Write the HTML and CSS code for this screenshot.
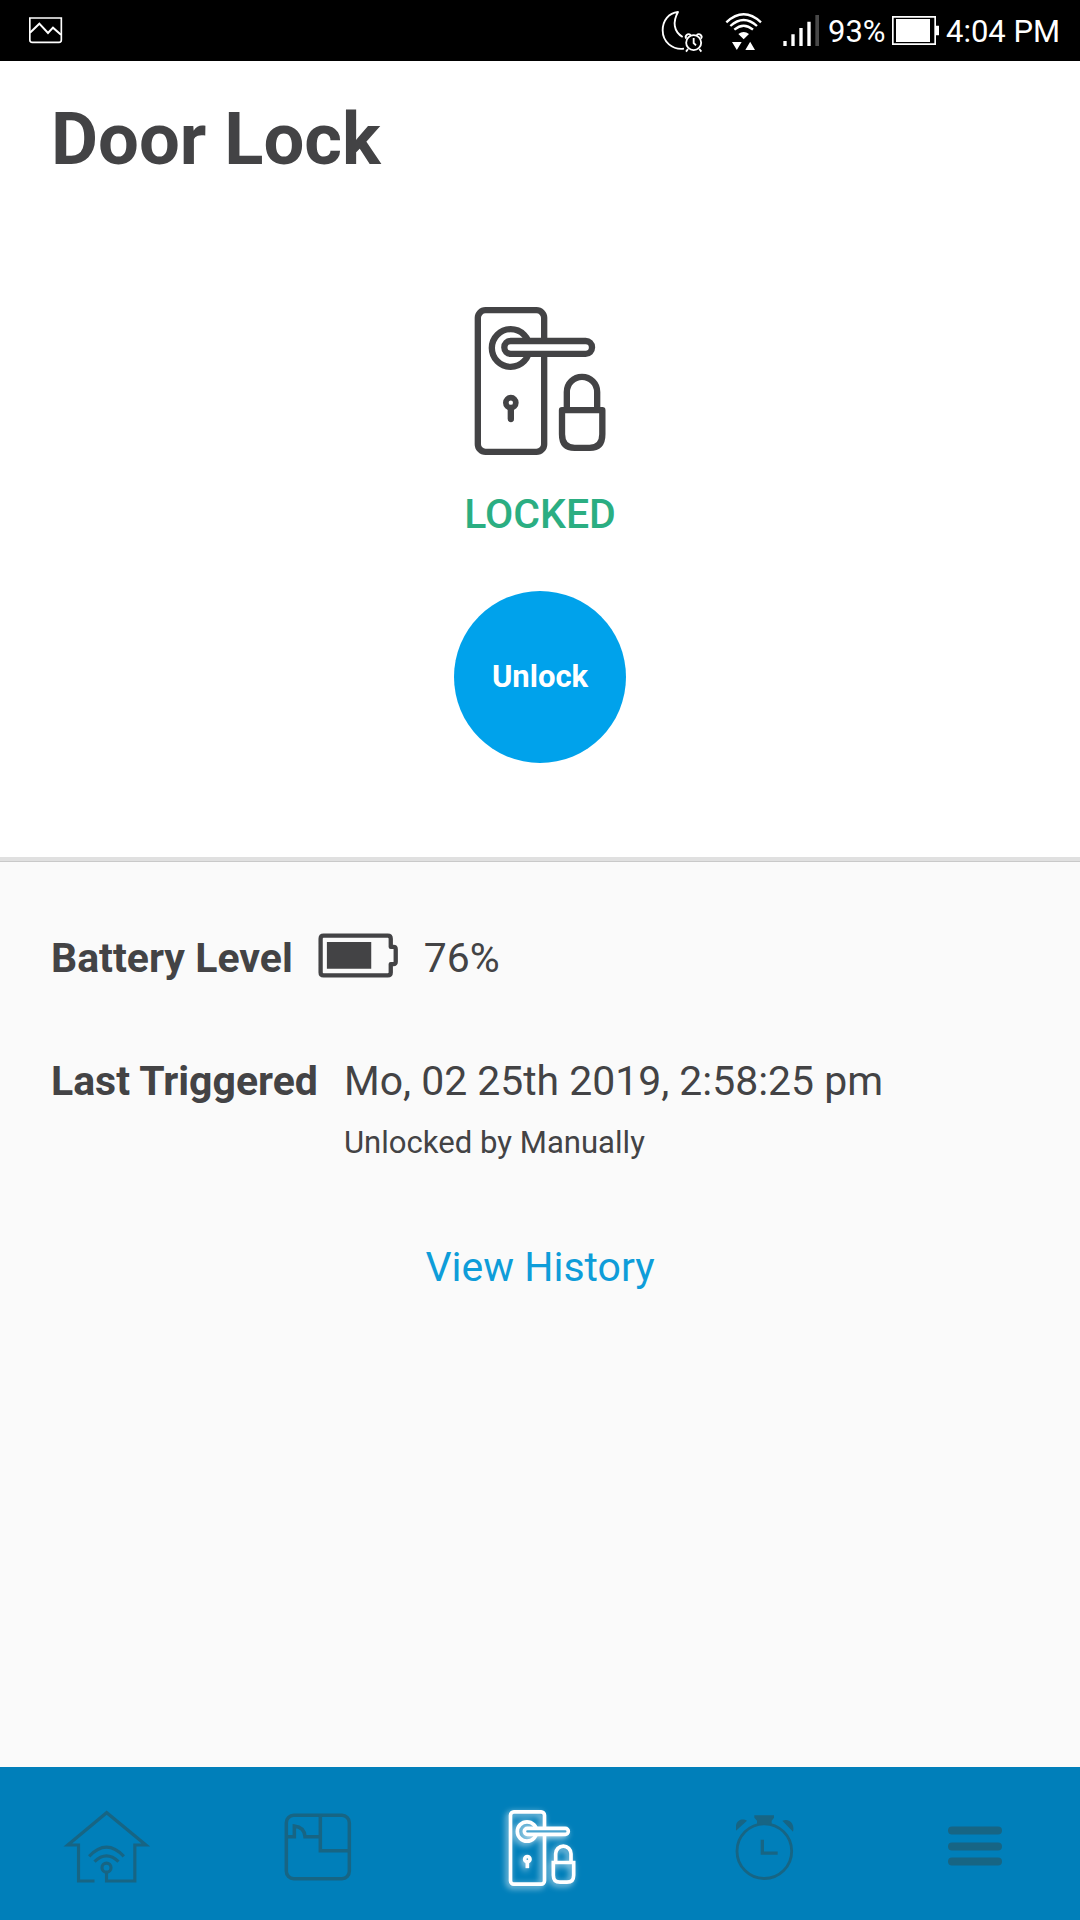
FILE: index.html
```html
<!DOCTYPE html>
<html lang="en">
<head>
<meta charset="utf-8">
<title>Door Lock</title>
<link rel="stylesheet" href="styles.css">
</head>
<body>
<header class="status">
  <svg class="status-image" viewBox="84 0 105 183" width="35" height="61" fill="none" stroke="#fff" stroke-width="5">
    <path d="M89.500 54H184v66q0 7-7 7H97q-7.500 0-7.500-7z"/>
    <path d="M90 98l28-27 26 28 15-16 24 21" stroke-width="6"/>
  </svg>
  <svg class="status-moon" viewBox="60 0 135 183" width="45" height="61" fill="none" stroke="#fff" stroke-width="5.500">
    <path d="M132 146C97 150 68 126 68 91C68 61 86 39 114 36C98 65 100 94 128 111" stroke-linejoin="round"/>
    <circle cx="161" cy="128" r="22.500"/>
    <path d="M161 114v15l7 7M144 147l-6 8M178 147l6 8"/>
    <path d="M139 116c-6-8 4-18 13-11M183 116c6-8-4-18-13-11"/>
  </svg>
  <svg class="status-wifi" viewBox="249 0 120 183" width="40" height="61" fill="none" stroke="#fff" stroke-width="7">
    <path d="M259 67Q311 19 363 67M271 78Q311 42 351 78M283 89Q311 65 339 89"/>
    <path d="M295 102Q311 90 327 102L311 118zM276 126h29l-14.500 24zM316 150h29l-14.500-25z" fill="#fff" stroke="none"/>
  </svg>
  <svg class="status-signal" viewBox="426 0 114 183" width="38" height="61" fill="#fff">
    <path d="M430 123h10v15h-10zM454 103h10v35h-10zM478 84h10v54h-10zM502 65h10v73h-10z"/>
    <path d="M526 45h11v93h-11z" fill="#484848"/>
  </svg>
  <span class="status-level">93%</span>
  <svg viewBox="216 0 144 183" width="48" height="61" fill="#fff">
    <path d="M218.500 50.500h127v82h-127z" fill="none" stroke="#fff" stroke-width="5"/>
    <path d="M228 57h102v69H228zM348 77h9v29h-9z"/>
  </svg>
  <time class="status-time">4:04 PM</time>
</header>

<main>
  <section class="hero">
    <h1 class="title">Door Lock</h1>
    <svg class="lock-icon" viewBox="90 69 420 465" width="140" height="155" fill="none" stroke="#434345" stroke-width="19">
      <rect x="113.500" y="90.500" width="199" height="425" rx="23"/>
      <circle cx="212" cy="204" r="56.500"/>
      <rect x="193" y="183" width="263" height="38.500" rx="19" fill="#fff"/>
      <circle cx="212.500" cy="368" r="15" stroke-width="17"/>
      <path d="M212.500 387v30" stroke-linecap="round"/>
      <path d="M380.500 383v-47a45.500 45.500 0 0 1 91 0v47"/>
      <path d="M366 390.500h121v72q0 41-38 41h-45q-38 0-38-41z" stroke-linejoin="round"/>
    </svg>
    <p class="state">LOCKED</p>
    <button class="unlock" type="button">Unlock</button>
  </section>

  <section class="details">
    <div class="row">
      <h2 class="label">Battery Level</h2>
      <svg class="battery" viewBox="867 67 240 136" width="80" height="45" fill="none" stroke="#434345" stroke-width="13" stroke-linejoin="round">
        <path d="M883 75h194q9 0 9 9v25h8q7 0 7 7v38q0 7-7 7h-8v25q0 9-9 9H883q-9 0-9-9V84q0-9 9-9z"/>
        <path d="M893 94h134v81H893z" fill="#434345" stroke="none"/>
      </svg>
      <span class="value">76%</span>
    </div>
    <div class="row">
      <h2 class="label">Last Triggered</h2>
      <div class="event">
        <p class="value">Mo, 02 25th 2019, 2:58:25 pm</p>
        <p class="cause">Unlocked by Manually</p>
      </div>
    </div>
    <a class="history" href="#">View History</a>
  </section>
</main>

<nav class="tabs">
  <a class="tab" href="#" aria-label="Home">
    <svg viewBox="50.500 142 300 276" width="100" height="92" fill="none" stroke="currentColor" stroke-width="9.500">
      <path d="M163 391H115V283H83L199.500 186 317 283H284V391H199V367"/>
      <circle cx="199" cy="351" r="13.500"/>
      <path d="M147 317Q199 262 251 317M163 333Q199 298 235 333"/>
    </svg>
  </a>
  <a class="tab" href="#" aria-label="Rooms">
    <svg viewBox="683 142 300 276" width="100" height="92" fill="none" stroke="currentColor" stroke-width="10.500">
      <rect x="738" y="194" width="189" height="190" rx="22"/>
      <path d="M840 194V300H926M840 258H794Q792 229 762 226V258H740"/>
    </svg>
  </a>
  <a class="tab tab-active" href="#" aria-label="Door Lock">
    <svg viewBox="33 52.500 300 276" width="100" height="92" fill="none" stroke="currentColor" stroke-width="11">
      <rect x="91.500" y="94" width="102" height="217" rx="10"/>
      <circle cx="141" cy="153" r="29"/>
      <rect x="133" y="143.500" width="132" height="18" rx="9" fill="#4ba5d0"/>
      <circle cx="142" cy="236" r="8"/>
      <path d="M142 244v19"/>
      <path d="M227 245V220a23 23 0 0 1 46 0v25M220 246h61v38q0 21-20 21h-21q-20 0-20-21z"/>
    </svg>
  </a>
  <a class="tab" href="#" aria-label="Alarms">
    <svg viewBox="45 52.500 300 276" width="100" height="92" fill="none" stroke="currentColor" stroke-width="8.500">
      <circle cx="193" cy="212" r="82"/>
      <path d="M187 178v40h46" stroke-width="10"/>
      <path d="M163 104h59v8l-7 9v10h-44v-10l-8-9zM108 151v-16c3-18 22-22 33-14zM279 154c6-23-10-42-32-33z" fill="currentColor" stroke="none"/>
    </svg>
  </a>
  <a class="tab" href="#" aria-label="Menu">
    <svg viewBox="675 52.500 300 276" width="100" height="92" fill="none" stroke="currentColor" stroke-width="24" stroke-linecap="round">
      <path d="M756 150H894M756 198H894M756 243H894"/>
    </svg>
  </a>
</nav>
</body>
</html>
```
FILE: styles.css
```css
* {
  box-sizing: border-box;
  margin: 0;
  padding: 0;
}

body {
  width: 1080px;
  height: 1920px;
  display: flex;
  flex-direction: column;
  background: #fafafa;
  color: #434345;
  font-family: Roboto, "Liberation Sans", sans-serif;
  overflow: hidden;
}

svg {
  display: block;
  flex: none;
}

a {
  text-decoration: none;
}

.status {
  height: 61px;
  display: flex;
  align-items: center;
  padding-left: 28px;
  background: #000;
  color: #fff;
  font-size: 31px;
  line-height: 61px;
  white-space: nowrap;
}

.status-moon {
  margin-left: auto;
}

.status-wifi {
  margin-left: 18px;
}

.status-signal {
  margin-left: 19px;
}

.status-level,
.status-time {
  padding-top: 1px;
}

.status-level {
  width: 64px;
  margin-left: 8px;
}

.status-time {
  width: 134px;
  margin-left: 6px;
}

main {
  flex: 1;
  display: flex;
  flex-direction: column;
}

.hero {
  height: 800px;
  display: flex;
  flex-direction: column;
  align-items: center;
  padding-top: 37px;
  background: #fff;
  border-bottom: 4px solid #e0e0e0;
  box-shadow: 0 1px 0 #c9c9c9;
}

.title {
  align-self: stretch;
  padding-left: 51px;
  font-size: 72.4px;
  line-height: 84px;
  font-weight: 700;
}

.lock-icon {
  margin-top: 121px;
}

.state {
  margin-top: 32px;
  color: #2bae82;
  font-size: 41px;
  line-height: 48px;
  font-weight: 500;
}

.unlock {
  width: 172px;
  height: 172px;
  margin-top: 52.5px;
  padding-top: 1px;
  border: 0;
  border-radius: 50%;
  background: #00a2eb;
  color: #fff;
  font: 700 31px/36px Roboto, "Liberation Sans", sans-serif;
}

.details {
  flex: 1;
  display: flex;
  flex-direction: column;
  padding: 73px 51px 0;
}

.row {
  display: flex;
  align-items: flex-start;
}

.row + .row {
  margin-top: 75px;
}

.label,
.value,
.history {
  font-size: 41px;
  line-height: 48px;
}

.label {
  font-weight: 700;
}

.value {
  font-size: 40.9px;
}

.battery {
  margin: -1.5px 25.5px 0 25.5px;
}

.event {
  margin-left: 26px;
}

.cause {
  margin-top: 20px;
  font-size: 31.1px;
  line-height: 36px;
}

.history {
  align-self: center;
  margin-top: 82px;
  color: #0e9dd9;
}

.tabs {
  height: 153px;
  display: grid;
  grid-template-columns: 213fr 209fr 238fr 210fr 210fr;
  align-items: center;
  justify-items: center;
  background: #007fba;
}

.tab {
  color: #176584;
}

.tab-active {
  color: #fff;
  filter: drop-shadow(-2px 2px 3px rgba(255, 255, 255, 0.75));
}
```
